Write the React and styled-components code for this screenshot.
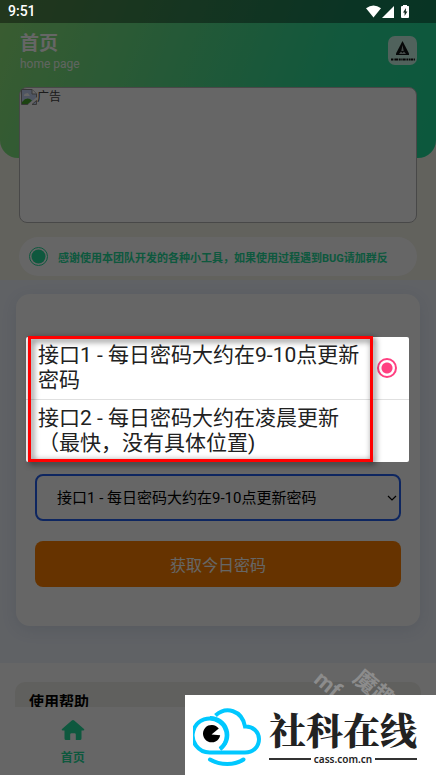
import React, { useState } from "react";
import styled, { createGlobalStyle } from "styled-components";

const Global = createGlobalStyle`
  *, *::before, *::after { box-sizing: border-box; }
  body {
    margin: 0;
    font-family: Roboto, "Noto Sans CJK SC", sans-serif;
    color: #000;
  }
  button, select, input { font-family: inherit; }
`;

const green = "#23dc9b";

const Page = styled.div`
  position: relative;
  display: flex;
  flex-direction: column;
  height: 100vh;
  overflow: hidden;
  background: #fff;
`;

const Content = styled.main`
  flex: 1;
  min-height: 0;
  overflow: hidden;
`;

const TopSection = styled.section`
  background: #f5f4e9;
  padding-bottom: 4px;
`;

const Header = styled.header`
  height: 158px;
  border-radius: 0 0 18px 18px;
  background: linear-gradient(110deg, #92e67a 0%, #5ade8a 40%, #2ddc98 72%, #1edc9a 100%);
`;

const StatusBar = styled.div`
  position: relative;
  z-index: 3;
  display: flex;
  align-items: center;
  justify-content: space-between;
  height: 23px;
  padding: 0 26px 0 8px;
  background: rgba(0, 0, 0, 0.4);
  color: #fff;
  font-size: 14px;
  font-weight: 500;
  line-height: 23px;
`;

const HeaderRow = styled.div`
  display: flex;
  justify-content: space-between;
  padding: 9px 19px 0 20px;
`;

const Title = styled.h1`
  margin: 0;
  color: #fff;
  font-size: 19px;
  font-weight: 700;
  line-height: 24px;
`;

const Subtitle = styled.p`
  margin: 0;
  color: rgba(255, 255, 255, 0.9);
  font-size: 12px;
  line-height: 16px;
`;

const AppBadge = styled.div`
  width: 29px;
  height: 29px;
  margin-top: 4px;
  border-radius: 7px;
  background: rgba(255, 255, 255, 0.75);
`;

const Banner = styled.div`
  display: flex;
  align-items: flex-start;
  height: 136px;
  margin: -71px 19px 0 19px;
  padding: 1px;
  border: 1px solid #b4b4b4;
  border-radius: 8px;
  background: #fff;
  color: #444;
  font-size: 12px;
  line-height: 16px;
`;

const Notice = styled.div`
  display: flex;
  align-items: center;
  gap: 10px;
  height: 39px;
  margin: 14px 19px 0;
  padding: 0 10px;
  border-radius: 20px;
  background: #fff;
  color: ${green};
  font-size: 11px;
  font-weight: 700;
  white-space: nowrap;
  overflow: hidden;
`;

const FormSection = styled.section`
  padding: 14px 16px 37px;
  background: #eff4fd;
`;

const Card = styled.form`
  display: flex;
  flex-direction: column;
  gap: 20px;
  padding: 180px 19px 39px;
  border-radius: 14px;
  background: #fff;
  box-shadow: 0 4px 16px rgba(40, 70, 110, 0.1);
`;

const SelectWrap = styled.div`
  position: relative;
`;

const Select = styled.select`
  appearance: none;
  display: block;
  width: 100%;
  height: 47px;
  padding: 0 24px 0 20px;
  border: 2px solid #2360f0;
  border-radius: 8px;
  background: #fff;
  color: #000;
  font-size: 15px;
`;

const Chevron = styled.svg`
  position: absolute;
  right: 4px;
  top: 19px;
  pointer-events: none;
`;

const Submit = styled.button`
  height: 46px;
  border: 0;
  border-radius: 8px;
  background: #ff8000;
  color: #fff;
  font-size: 16px;
`;

const HelpSection = styled.section`
  padding: 19px 15px 0;
`;

const HelpCard = styled.div`
  padding: 8px 14px 20px;
  border-radius: 10px;
  background: #f1f0ea;
`;

const HelpTitle = styled.h2`
  margin: 0;
  font-size: 15px;
  font-weight: 700;
  line-height: 24px;
`;

const TabBar = styled.nav`
  display: grid;
  grid-template-columns: repeat(3, 1fr);
  height: 68px;
  background: #fff;
`;

const Tab = styled.a`
  display: flex;
  flex-direction: column;
  align-items: center;
  gap: 8px;
  padding-top: 12px;
  color: ${green};
  font-size: 12px;
  font-weight: 700;
  line-height: 18px;
  text-decoration: none;
`;

const Scrim = styled.div`
  position: absolute;
  inset: 0;
  z-index: 2;
  display: flex;
  align-items: center;
  padding: 23px 27px 0 26px;
  background: rgba(0, 0, 0, 0.6);
`;

const Dialog = styled.div`
  position: relative;
  width: 100%;
  border-radius: 2px;
  background: #fff;
`;

const Option = styled.label`
  display: flex;
  align-items: center;
  justify-content: space-between;
  padding: 6px 12px;
  color: #212121;
  font-size: 21px;
  line-height: 25px;

  & + & {
    border-top: 1px solid #e0e0e0;
  }
`;

const OptionText = styled.span`
  flex: 1;
  padding-right: 8px;
`;

const Radio = styled.input`
  appearance: none;
  flex: none;
  width: 20px;
  height: 20px;
  margin: 0;
  border-radius: 50%;

  &:checked {
    border: 2px solid #ff4081;
    background: radial-gradient(circle, #ff4081 5px, transparent 6px);
  }
`;

const Highlight = styled.div`
  position: absolute;
  top: -1px;
  left: 2px;
  right: 36px;
  bottom: 0;
  border: 3px solid #f00;
  filter: drop-shadow(2px 2px 3px rgba(0, 0, 0, 0.7));
  pointer-events: none;
`;

const Watermark = styled.div`
  position: absolute;
  right: 0;
  bottom: 0;
  z-index: 3;
  width: 126px;
  height: 112px;
  overflow: hidden;
  color: #8c8c8c;
  font-weight: 700;
`;

const Mark = styled.span`
  position: absolute;
  left: ${(p) => p.$x}px;
  top: ${(p) => p.$y}px;
  font-size: ${(p) => p.$size}px;
  line-height: 24px;
  white-space: nowrap;
  transform: rotate(40deg);
  transform-origin: 0 0;
`;

const Brand = styled.div`
  position: absolute;
  right: 0;
  bottom: 0;
  z-index: 4;
  display: flex;
  align-items: flex-start;
  gap: 8px;
  height: 80px;
  padding: 13px 19px 0 8px;
  background: #fff;
  color: #222;
`;

const BrandName = styled.div`
  font-family: "Noto Serif CJK SC", "Noto Sans CJK SC", serif;
  font-size: 37px;
  font-weight: 900;
  line-height: 42px;
`;

const BrandSite = styled.div`
  display: flex;
  align-items: center;
  gap: 3px;
  margin-top: 2px;
  font-family: "Noto Sans", sans-serif;
  font-size: 10px;
  font-weight: 600;
  line-height: 14px;

  &::before, &::after {
    content: "";
    flex: 1;
    height: 2px;
    background: #333;
  }
`;

const StatusIcons = () => (
  <svg width="44" height="14" viewBox="0 0 44 14" fill="#fff" aria-hidden="true">
    <path d="M0 3.2 Q7.5 -2 15 3.2 L7.5 12.6 Z" />
    <path d="M28 1 V13 H16 Z" />
    <path d="M37 1 V0 H41 V1 H42.500 Q43 1 43 2 V12 Q43 13 42 13 H36 Q35 13 35 12 V2 Q35 1 36 1 Z" />
    <path d="M40 3 L37 7.600 H38.600 V11 L41.400 6.400 H39.800 Z" fill="#10291e" />
  </svg>
);

const BadgeArt = () => (
  <svg width="29" height="29" viewBox="0 0 29 29" aria-hidden="true">
    <path d="M14.500 5 L21 17.500 V19 H8 V17.500 Z" fill="#101514" />
    <path d="M14.500 9 L13.300 15 H15.700 Z M11 18 L13 15.500 L14.500 17 L16 15.500 L18 18 Z" fill="#a9b9b3" />
    <path d="M3 23.500 H27" stroke="#111" strokeWidth="2" strokeDasharray="2 .6 1 .4 3 .7" />
  </svg>
);

const BrokenImage = () => (
  <svg width="16" height="16" viewBox="0 0 16 16" aria-hidden="true">
    <path d="M.5 .5 H11 L15.500 5 V10 L8 15.500 H.5 Z" fill="#c5d5f4" stroke="#8b8b8b" />
    <path d="M11 .5 V5 H15.500" fill="#fff" stroke="#8b8b8b" />
    <path d="M3 6.500 Q3 4.500 5 4.500 Q7 3 8 5.500 Q9 6 8.500 7 H3 Z" fill="#fff" />
    <path d="M1 15 V13 Q6 7 11 11.500 L7 15 Z" fill="#46a82b" />
    <path d="M6.500 16 L16 8 V11 L10.500 16 Z" fill="#fff" />
    <path d="M11 15.500 H15.500 V11.500 Z" fill="#c5d5f4" stroke="#8b8b8b" />
  </svg>
);

const NoticeIcon = () => (
  <svg width="19" height="19" viewBox="0 0 19 19" fill={green} aria-hidden="true">
    <circle cx="9.500" cy="9.500" r="7" />
    <circle cx="9.500" cy="9.500" r="9" fill="none" stroke={green} />
  </svg>
);

const HomeIcon = () => (
  <svg width="24" height="22" viewBox="0 0 24 22" fill={green} aria-hidden="true">
    <path d="M10.800 1.500 Q12 .5 13.200 1.500 L23 10 Q24 11.300 22.500 11.500 H20.500 V19.500 Q20.500 21 19 21 H14.800 V15.500 Q14.800 14.200 13.500 14.200 H10.500 Q9.200 14.200 9.200 15.500 V21 H5 Q3.500 21 3.500 19.500 V11.500 H1.500 Q0 11.300 1 10 Z" />
  </svg>
);

const BrandLogo = () => (
  <svg width="68" height="60" viewBox="0 0 68 60" fill="none" stroke="#00c8ff" strokeWidth="4" aria-hidden="true">
    <path d="M22.500 7.500 C33 -2 49 2 52 18.500 C60 18 66 24 66 31 C66 39 60 44.500 52 44.500 H17" />
    <path d="M27 41 A17 17 0 1 0 17 44.500" />
    <path d="M27 41 A17 17 0 0 0 17 10" />
    <path d="M17 51.500 C27 57.500 42 57.500 50.500 51.500" strokeLinecap="round" />
    <path d="M18.500 26.500 L25.800 20.600 A8.700 8.700 0 1 0 27.200 27.300 L18.500 26.500 Z" fill="#000" stroke="none" />
  </svg>
);

const options = [
  { id: "api1", text: "接口1 - 每日密码大约在9-10点更新密码" },
  { id: "api2", text: "接口2 - 每日密码大约在凌晨更新（最快，没有具体位置)" },
];

export default function App() {
  const [source, setSource] = useState("api1");
  return (
    <Page>
      <Global />
      <Content>
        <TopSection>
          <Header>
            <StatusBar>
              <span>9:51</span>
              <StatusIcons />
            </StatusBar>
            <HeaderRow>
              <div>
                <Title>首页</Title>
                <Subtitle>home page</Subtitle>
              </div>
              <AppBadge><BadgeArt /></AppBadge>
            </HeaderRow>
          </Header>
          <Banner><BrokenImage />广告</Banner>
          <Notice>
            <NoticeIcon />
            <span>感谢使用本团队开发的各种小工具，如果使用过程遇到BUG请加群反</span>
          </Notice>
        </TopSection>
        <FormSection>
          <Card onSubmit={(e) => e.preventDefault()}>
            <SelectWrap>
              <Select aria-label="接口" value={source} onChange={(e) => setSource(e.target.value)}>
                {options.map((o) => <option key={o.id} value={o.id}>{o.text}</option>)}
              </Select>
              <Chevron width="10" height="10" viewBox="0 0 10 10" fill="none" stroke="#000" strokeWidth="1.2">
                <path d="M1 3 L5 7 L9 3" />
              </Chevron>
            </SelectWrap>
            <Submit type="submit">获取今日密码</Submit>
          </Card>
        </FormSection>
        <HelpSection>
          <HelpCard><HelpTitle>使用帮助</HelpTitle></HelpCard>
        </HelpSection>
      </Content>
      <TabBar>
        <Tab href="#home"><HomeIcon />首页</Tab>
      </TabBar>
      <Scrim>
        <Dialog role="dialog" aria-label="接口">
          {options.map((o) => (
            <Option key={o.id}>
              <OptionText>{o.text}</OptionText>
              <Radio type="radio" name="source" checked={source === o.id} onChange={() => setSource(o.id)} />
            </Option>
          ))}
          <Highlight />
        </Dialog>
      </Scrim>
      <Watermark aria-hidden="true">
        <Mark $x={15} $y={4} $size={22}>mf</Mark>
        <Mark $x={54} $y={3} $size={23}>魔趣</Mark>
      </Watermark>
      <Brand>
        <BrandLogo />
        <div>
          <BrandName>社科在线</BrandName>
          <BrandSite>cass.com.cn</BrandSite>
        </div>
      </Brand>
    </Page>
  );
}
